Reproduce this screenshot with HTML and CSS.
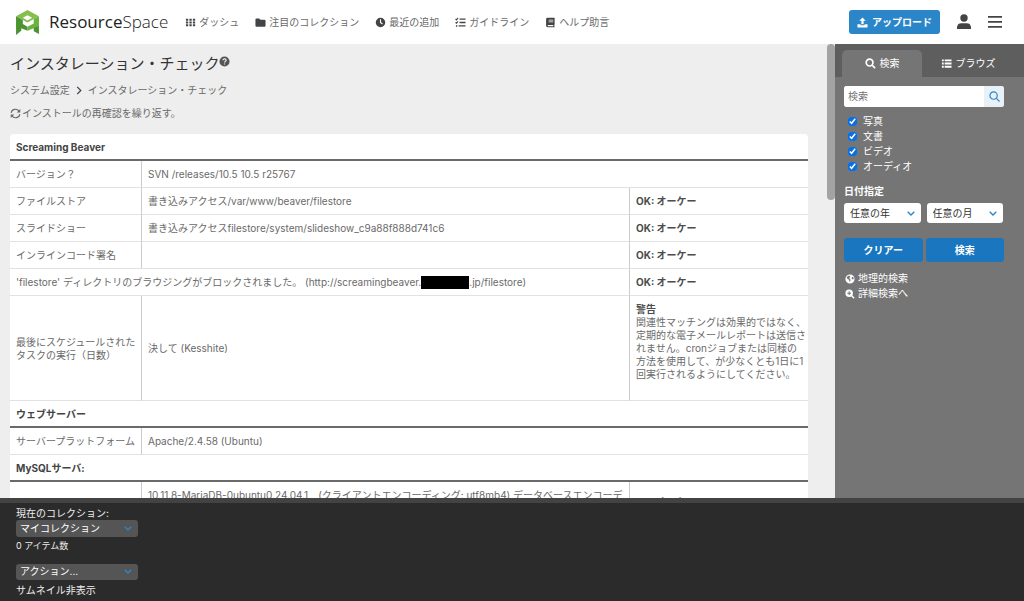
FILE: index.html
```html
<!DOCTYPE html>
<html lang="ja">
<head>
<meta charset="utf-8">
<meta name="viewport" content="width=device-width, initial-scale=1">
<title>インスタレーション・チェック</title>
<link rel="stylesheet" href="styles.css">
</head>
<body>
<header class="header">
  <a class="logo" href="#">
    <svg class="logo-mark" viewBox="0 0 24 24" aria-hidden="true">
      <path fill="#86bf4c" fill-rule="evenodd" d="M12 0 23 6 12 12 1 6zM12 5 7.500 7.500 12 10l4.500-2.500z"/>
      <path fill="#4b9430" d="M1 6l6.500 3.500v4L12 16v4l-6-2.500V20l-5 4z"/>
      <path fill="#6cb33e" d="M23 6v9l-5 2.500-6 2.500v-4l6-3V8.700z"/>
      <path fill="#4b9430" d="M18 17l5-2v8l-5-2.500z"/>
    </svg>
    <span class="logo-text"><b>Resource</b>Space</span>
  </a>
  <nav class="nav">
    <a href="#"><svg class="ic" viewBox="0 0 12 12"><path d="M1 2h2.500v2.200H1zM4.800 2h2.500v2.200H4.800zM8.600 2h2.500v2.200H8.600zM1 5h2.500v2H1zM4.800 5h2.500v2H4.800zM8.600 5h2.500v2H8.600zM1 8h2.500v2H1zM4.800 8h2.500v2H4.800zM8.600 8h2.500v2H8.600z"/></svg>ダッシュ</a>
    <a href="#"><svg class="ic" viewBox="0 0 12 12"><path d="M1.500 1.500h3L6 3h4.500a1 1 0 0 1 1 1v5.500a1 1 0 0 1-1 1h-9a1 1 0 0 1-1-1v-7a1 1 0 0 1 1-1z"/></svg>注目のコレクション</a>
    <a href="#"><svg class="ic" viewBox="0 0 12 12"><path fill-rule="evenodd" d="M6 .8a5.200 5.200 0 1 1 0 10.400A5.200 5.200 0 0 1 6 .8zM5.400 2.500v3.700l2.400 1.900.8-.9-2-1.600V2.500z"/></svg>最近の追加</a>
    <a href="#"><svg class="ic" viewBox="0 0 12 12"><path d="M5 1.500h6.500v1.400H5zM5 5.300h6.500v1.400H5zM4 9h7.500v1.400H4zM1 9h1.600v1.500H1z"/><path class="line" d="M.6 2.200l1 .9L3.300 1M.6 6l1 .9 1.700-2.100"/></svg>ガイドライン</a>
    <a href="#"><svg class="ic" viewBox="0 0 12 12"><path fill-rule="evenodd" d="M2.800.8h7.700v7.700l-.4.300v1.300l.4.300v.8H2.800A1.600 1.600 0 0 1 1.200 9.600V2.400A1.600 1.600 0 0 1 2.800.8zM4 3v.9h5V3zM4 4.900v.9h5v-.9zM3 8.800v1.200h6V8.800z"/></svg>ヘルプ助言</a>
  </nav>
  <div class="header-actions">
    <button class="upload" type="button"><svg class="ic" viewBox="0 0 12 12"><path d="M6 .5 9.500 4H7.200v4H4.800V4H2.500zM.5 8h3.300v1h4.400V8h3.300v3.500H.5z"/></svg>アップロード</button>
    <button class="icon-button" type="button" aria-label="ユーザー"><svg viewBox="0 0 14 16"><circle cx="7" cy="4" r="3.700"/><path d="M0 15v-1.500a4.500 4.500 0 0 1 4.500-4.300h5a4.500 4.500 0 0 1 4.500 4.300V15z"/></svg></button>
    <button class="icon-button" type="button" aria-label="メニュー"><svg viewBox="0 0 14 16"><path d="M0 2h14v1.700H0zM0 7h14v1.700H0zM0 12h14v1.700H0z"/></svg></button>
  </div>
</header>

<div class="middle">
  <main class="content">
    <h1 class="title">インスタレーション・チェック<svg class="help" viewBox="0 0 12 12"><circle cx="6" cy="6" r="5.500"/><path d="M4.300 4.700c0-2.200 3.500-2.200 3.500 0C7.800 6 6 5.800 6 7.200M6 8.200v1.200"/></svg></h1>
    <nav class="crumbs"><a href="#">システム設定</a><svg class="crumb-arrow" viewBox="0 0 6 10"><path d="M1 1l4 4-4 4"/></svg><span>インスタレーション・チェック</span></nav>
    <a class="recheck" href="#"><svg class="ic" viewBox="0 0 12 12"><path class="line" d="M1.300 5.300C1.800 1 7.500.2 9.900 3.400M10.700 6.700C10.200 11 4.500 11.800 2.100 8.600"/><path d="M11.200 1v4H7.300zM.8 11V7h3.900z"/></svg>インストールの再確認を繰り返す。</a>
    <table class="report">
      <colgroup><col class="col-name"><col><col class="col-status"></colgroup>
      <tbody>
        <tr class="group"><th colspan="3">Screaming Beaver</th></tr>
        <tr><td>バージョン？</td><td colspan="2">SVN /releases/10.5 10.5 r25767</td></tr>
        <tr><td>ファイルストア</td><td>書き込みアクセス/var/www/beaver/filestore</td><td><b>OK: オーケー</b></td></tr>
        <tr><td>スライドショー</td><td>書き込みアクセスfilestore/system/slideshow_c9a88f888d741c6</td><td><b>OK: オーケー</b></td></tr>
        <tr><td>インラインコード署名</td><td></td><td><b>OK: オーケー</b></td></tr>
        <tr><td colspan="2">'filestore' ディレクトリのブラウジングがブロックされました。 (http://screamingbeaver.<span class="redacted"></span>.jp/filestore)</td><td><b>OK: オーケー</b></td></tr>
        <tr><td>最後にスケジュールされた<br>タスクの実行（日数）</td><td>決して (Kesshite)</td><td class="warning"><b>警告</b><br>関連性マッチングは効果的ではなく、<br>定期的な電子メールレポートは送信さ<br>れません。cronジョブまたは同様の<br>方法を使用して、が少なくとも1日に1<br>回実行されるようにしてください。<br><br></td></tr>
        <tr class="group"><th colspan="3">ウェブサーバー</th></tr>
        <tr><td>サーバープラットフォーム</td><td colspan="2">Apache/2.4.58 (Ubuntu)</td></tr>
        <tr class="group"><th colspan="3">MySQLサーバ:</th></tr>
        <tr><td>バージョン？</td><td>10.11.8-MariaDB-0ubuntu0.24.04.1　(クライアントエンコーディング: utf8mb4) データベースエンコーデ<br>ィング: utf8mb4)</td><td><b>OK: オーケー</b></td></tr>
      </tbody>
    </table>
  </main>
  <div class="scrollbar"><div class="thumb"></div></div>
  <aside class="sidebar">
    <div class="tabs">
      <button class="tab active" type="button"><svg class="ic" viewBox="0 0 12 12"><circle class="line thick" cx="5" cy="5" r="3.700"/><path class="line thick" d="M8 8l3 3"/></svg>検索</button>
      <button class="tab" type="button"><svg class="ic" viewBox="0 0 12 12"><path d="M1 1.500h2v2H1zM4 1.500h7.500v2H4zM1 5h2v2H1zM4 5h7.500v2H4zM1 8.500h2v2H1zM4 8.500h7.500v2H4z"/></svg>ブラウズ</button>
    </div>
    <form class="search">
      <div class="search-box">
        <input type="text" placeholder="検索" aria-label="検索">
        <button type="button" aria-label="検索"><svg viewBox="0 0 12 12"><circle cx="5" cy="5" r="4"/><path d="M8 8l3.500 3.500"/></svg></button>
      </div>
      <div class="types">
        <label><input type="checkbox" checked>写真</label>
        <label><input type="checkbox" checked>文書</label>
        <label><input type="checkbox" checked>ビデオ</label>
        <label><input type="checkbox" checked>オーディオ</label>
      </div>
      <div class="date-label">日付指定</div>
      <div class="pair dates">
        <select aria-label="年"><option>任意の年</option></select>
        <select aria-label="月"><option>任意の月</option></select>
      </div>
      <div class="pair buttons">
        <button type="button">クリアー</button>
        <button type="button">検索</button>
      </div>
      <div class="links">
        <a href="#"><svg class="ic" viewBox="0 0 12 12"><path fill-rule="evenodd" d="M6 .5a5.500 5.500 0 1 1 0 11A5.500 5.500 0 0 1 6 .5zM2 3.500l1 2.500 2 .8.300 2.700 1.500-2L6 5.500 4.500 5l2-1.500L5 1.800zM8.500 3.500L7.800 5l1.500 1.500 1.200-.5-.5-2.500z"/></svg>地理的検索</a>
        <a href="#"><svg class="ic" viewBox="0 0 12 12"><path fill-rule="evenodd" d="M5 .5a4.500 4.500 0 1 1 0 9 4.500 4.500 0 0 1 0-9zM4.400 2.800v1.600H2.800v1.200h1.600v1.600h1.200V5.600h1.600V4.400H5.600V2.800z"/><path class="line thick" d="M8 8l3 3"/></svg>詳細検索へ</a>
      </div>
    </form>
  </aside>
</div>

<footer class="collection">
  <label for="collection">現在のコレクション:</label>
  <select id="collection"><option>マイコレクション</option></select>
  <div class="count">0 アイテム数</div>
  <select class="actions" aria-label="アクション"><option>アクション...</option></select>
  <a href="#">サムネイル非表示</a>
</footer>
</body>
</html>
```
FILE: styles.css
```css
* { box-sizing: border-box; }
body {
  margin: 0;
  height: 100vh;
  display: flex;
  flex-direction: column;
  overflow: hidden;
  background: #eee;
  color: #6a6a6a;
  font: 10px/13px "Inter", "Noto Sans CJK JP", sans-serif;
}
a { color: inherit; text-decoration: none; }
button, input, select { font: inherit; margin: 0; border: 0; padding: 0; }
button { cursor: pointer; }
.ic { width: 11px; height: 11px; fill: currentColor; flex: none; }
.line { fill: none; stroke: currentColor; stroke-width: 1.2; }
.thick { stroke-width: 1.8; }

.header {
  flex: none;
  height: 44px;
  display: flex;
  align-items: center;
  padding: 0 22px 0 15px;
  background: #fff;
}
.logo { display: flex; align-items: center; gap: 9px; color: #222; }
.logo-mark { width: 25px; height: 25px; }
.logo-text { font: 300 17px/24px "Open Sans", sans-serif; }
.logo-text b { font-weight: 500; }
.nav { display: flex; gap: 16px; margin-left: 17px; white-space: nowrap; }
.nav a { display: flex; align-items: center; gap: 3px; }
.nav .ic { color: #444; }
.header-actions { display: flex; align-items: center; gap: 17px; margin-left: auto; }
.upload {
  display: flex;
  align-items: center;
  justify-content: center;
  gap: 4px;
  width: 91px;
  height: 24px;
  border-radius: 3px;
  background: #2a86c8;
  color: #fff;
  font-weight: 700;
}
.icon-button { background: none; display: flex; }
.icon-button svg { width: 14px; height: 16px; fill: #444; }

.middle { flex: 1; min-height: 0; display: flex; }
.content { flex: 1; min-width: 0; overflow: hidden; padding: 9px 19px 0 10px; }
.title { display: flex; margin: 0; font-size: 15px; line-height: 22px; font-weight: 400; color: #333; }
.help { width: 11px; height: 11px; margin-top: 3px; fill: #555; }
.help path { fill: none; stroke: #eee; stroke-width: 1.3; }
.crumbs { display: flex; align-items: center; margin-top: 9px; }
.crumb-arrow { width: 6px; height: 9px; margin: 0 6px; fill: none; stroke: #444; stroke-width: 1.4; }
.recheck { display: flex; align-items: center; gap: 1px; margin: 10px 0 14px; }
.report {
  width: 100%;
  table-layout: fixed;
  border-collapse: separate;
  border-spacing: 0;
  background: #fff;
  border-radius: 4px 4px 0 0;
  white-space: nowrap;
}
.col-name { width: 131px; }
.col-status { width: 179px; }
.report td, .report th { padding: 7px 0 6px 6px; text-align: left; border-bottom: 1px solid #e2e2e2; }
.report td + td { border-left: 1px solid #ccc; }
.report th { padding-bottom: 5px; border-bottom: 2px solid #6a6a6a; color: #444; }
.report b { font-weight: 700; color: #4c4c4c; }
.redacted { display: inline-block; width: 48px; height: 13px; background: #000; vertical-align: bottom; }

.scrollbar { flex: none; width: 8px; }
.thumb { height: 156px; border-radius: 4px; background: #a3a3a3; }

.sidebar { flex: none; width: 189px; background: #757575; color: #fff; }
.tabs { display: flex; height: 33px; padding: 6px 0 0 7px; background: #5e5e5e; }
.tab {
  flex: 1;
  display: flex;
  align-items: center;
  justify-content: center;
  gap: 4px;
  padding-right: 10px;
  background: none;
  color: #fff;
}
.tab.active { flex: none; width: 80px; padding: 0; border-radius: 5px 5px 0 0; background: #757575; }
.search { padding: 9px 20px 0 9px; }
.search-box { display: flex; height: 21px; border-radius: 3px; overflow: hidden; background: #fff; }
.search-box input { flex: 1; min-width: 0; padding: 0 4px; outline: 0; }
.search-box input::placeholder { color: #757575; }
.search-box button { width: 20px; display: flex; align-items: center; justify-content: center; background: #e8f0f8; }
.search-box svg { width: 11px; height: 11px; fill: none; stroke: #2a86c8; stroke-width: 1.3; }
.types { display: flex; flex-direction: column; gap: 2px; margin: 8px 0 12px 4px; }
.types label { display: flex; align-items: center; gap: 6px; }
.types input { width: 9px; height: 9px; accent-color: #0b6fe0; }
.date-label { font-weight: 700; }
.pair { display: grid; grid-template-columns: 1fr 1fr; }
.dates { gap: 6px; margin: 5px 1px 15px 0; }
select {
  appearance: none;
  background: #fff url("data:image/svg+xml,%3Csvg xmlns='http://www.w3.org/2000/svg' viewBox='0 0 8 5'%3E%3Cpath d='M.7.7 4 4 7.300.7' fill='none' stroke='%232a86c8' stroke-width='1.300'/%3E%3C/svg%3E") no-repeat right 6px center / 8px 5px;
}
.dates select { height: 20px; padding-left: 6px; border-radius: 3px; color: #333; }
.buttons { gap: 3px; }
.buttons button { height: 24px; border-radius: 3px; background: #1a77bf; color: #fff; font-weight: 700; }
.links { display: flex; flex-direction: column; gap: 2px; margin: 10px 0 0 1px; }
.links a { display: flex; align-items: center; gap: 3px; }
.links .ic { width: 10px; height: 10px; }

.collection {
  flex: none;
  display: flex;
  flex-direction: column;
  align-items: flex-start;
  height: 103px;
  padding: 4px 16px;
  border-top: 5px solid #434343;
  background: #2b2b2b;
  color: #eee;
}
.collection select { width: 122px; height: 17px; padding-left: 4px; border-radius: 3px; background-color: #555; color: #fff; }
.count { margin-top: 2px; font-size: 9px; }
.collection .actions { margin: 12px 0 4px; }
```
